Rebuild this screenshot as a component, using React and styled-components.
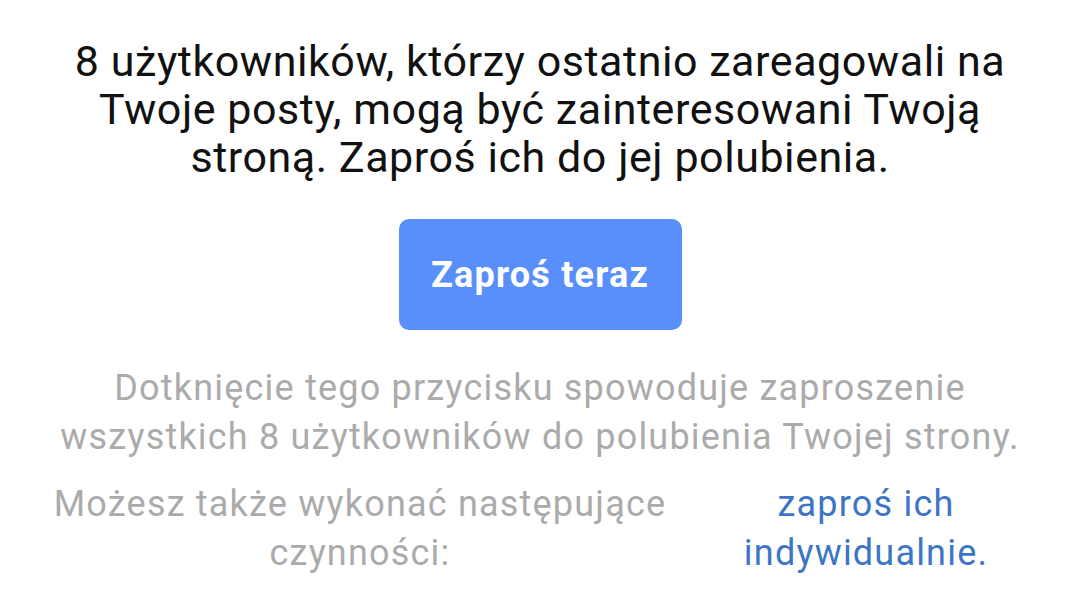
import React from 'react';
import styled, {createGlobalStyle} from 'styled-components';

const GlobalStyle = createGlobalStyle`
    html, body {
        margin: 0;
        padding: 0;
        background: #ffffff;
    }
    body {
        font-family: Roboto, "Noto Sans", sans-serif;
    }
`;

const Page = styled.div`
    width: 1080px;
    height: 616px;
    overflow: hidden;
    display: flex;
    flex-direction: column;
    align-items: center;
    padding-top: 37px;
    box-sizing: border-box;
`;

const Headline = styled.p`
    margin: 0;
    width: 960px;
    text-align: center;
    font-size: 43px;
    line-height: 48px;
    letter-spacing: 0.55px;
    color: #111111;
`;

const InviteButton = styled.button`
    box-sizing: border-box;
    margin-top: 38px;
    padding: 0;
    width: 283px;
    height: 111px;
    border: none;
    border-radius: 10px;
    background: #598ffa;
    color: #ffffff;
    font-family: Roboto, sans-serif;
    font-weight: 700;
    font-size: 36px;
    letter-spacing: 1.2px;
    cursor: pointer;
`;

const Note = styled.p`
    margin: 34px 0 0;
    width: 990px;
    text-align: center;
    font-size: 36px;
    line-height: 49px;
    letter-spacing: 1.2px;
    color: #ababab;
`;

const Options = styled.div`
    display: grid;
    grid-template-columns: 720px 292px;
    width: 1080px;
    margin-top: 18px;
    font-size: 36px;
    line-height: 49px;
    letter-spacing: 1.2px;
    text-align: center;
`;

const Hint = styled.div`
    color: #ababab;
    padding: 0 40px;
`;

const Link = styled.a`
    color: #3d75c6;
    text-decoration: none;
`;

export default function App() {
    return (
        <>
            <GlobalStyle/>
            <Page>
                <Headline>
                    8 użytkowników, którzy ostatnio zareagowali na Twoje posty, mogą być zainteresowani Twoją stroną. Zaproś ich do jej polubienia.
                </Headline>
                <InviteButton>Zaproś teraz</InviteButton>
                <Note>
                    Dotknięcie tego przycisku spowoduje zaproszenie wszystkich 8 użytkowników do polubienia Twojej strony.
                </Note>
                <Options>
                    <Hint>Możesz także wykonać następujące czynności:</Hint>
                    <Link href="#">zaproś ich indywidualnie.</Link>
                </Options>
            </Page>
        </>
    );
}
